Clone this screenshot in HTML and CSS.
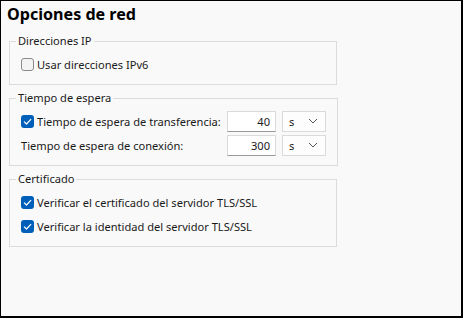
FILE: index.html
```html
<!DOCTYPE html>
<html lang="es">
  <head>
    <meta charset="UTF-8" />
    <title>Opciones de red</title>
    <link rel="stylesheet" href="styles.css">
  </head>
  <body>
    <div class="panel">
      <h1>Opciones de red</h1>

      <fieldset class="group">
        <legend>Direcciones IP</legend>
        <label class="row">
          <span class="check"></span>
          Usar direcciones IPv6
        </label>
      </fieldset>

      <fieldset class="group">
        <legend>Tiempo de espera</legend>
        <div class="row">
          <label class="row-label">
            <span class="check checked">
              <svg viewBox="0 0 13 13" width="13" height="13"><path d="M3.3 6.8 L5.5 9 L9.8 4.4" fill="none" stroke="#fff" stroke-width="1.2" stroke-linecap="round" stroke-linejoin="round"/></svg>
            </span>
            Tiempo de espera de transferencia:
          </label>
          <input class="num" type="text" value="40" />
          <div class="unit">s
            <svg viewBox="0 0 10 6" width="10" height="6"><path d="M1 1 L5 5 L9 1" fill="none" stroke="#555" stroke-width="1"/></svg>
          </div>
        </div>
        <div class="row">
          <label class="row-label">Tiempo de espera de conexión:</label>
          <input class="num" type="text" value="300" />
          <div class="unit">s
            <svg viewBox="0 0 10 6" width="10" height="6"><path d="M1 1 L5 5 L9 1" fill="none" stroke="#555" stroke-width="1"/></svg>
          </div>
        </div>
      </fieldset>

      <fieldset class="group">
        <legend>Certificado</legend>
        <label class="row">
          <span class="check checked">
            <svg viewBox="0 0 13 13" width="13" height="13"><path d="M3.3 6.8 L5.5 9 L9.8 4.4" fill="none" stroke="#fff" stroke-width="1.2" stroke-linecap="round" stroke-linejoin="round"/></svg>
          </span>
          Verificar el certificado del servidor TLS/SSL
        </label>
        <label class="row">
          <span class="check checked">
            <svg viewBox="0 0 13 13" width="13" height="13"><path d="M3.3 6.8 L5.5 9 L9.8 4.4" fill="none" stroke="#fff" stroke-width="1.2" stroke-linecap="round" stroke-linejoin="round"/></svg>
          </span>
          Verificar la identidad del servidor TLS/SSL
        </label>
      </fieldset>
    </div>
  </body>
</html>
```

FILE: styles.css
```css
html,
body {
  margin: 0;
  height: 100%;
}

body {
  font-family: "Noto Sans", "Open Sans", sans-serif;
  font-size: 11.1px;
  color: #1a1a1a;
  background-color: #f9f9f9;
}

.panel {
  box-sizing: border-box;
  height: 318px;
  width: 463px;
  border-top: 1px solid #000;
  border-left: 1px solid #000;
  border-right: 2px solid #000;
  border-bottom: 2px solid #000;
  padding: 0 0 0 8px;
}

h1 {
  margin: 0 0 0 -2px;
  padding-top: 1px;
  font-size: 16.1px;
  font-weight: bold;
  line-height: 24px;
  color: #000;
  height: 32px;
  white-space: nowrap;
}

.group {
  box-sizing: border-box;
  width: 328px;
  margin: 0 0 6px 0;
  padding: 4px 11px 8px;
  border: 1px solid #dcdcdc;
  white-space: nowrap;
}

.group legend {
  margin-left: -5px;
  padding: 0 2px;
  line-height: 14px;
}

.row {
  display: flex;
  align-items: center;
  height: 24px;
}

.row-label {
  display: flex;
  align-items: center;
  width: 206px;
}

.check {
  box-sizing: border-box;
  display: inline-flex;
  width: 13px;
  height: 13px;
  margin-right: 3px;
  border: 1px solid #8a8a8a;
  border-radius: 3px;
  background: #f3f3f3;
}

.check.checked {
  border: none;
  background: #005fb8;
}

.num {
  box-sizing: border-box;
  width: 49px;
  height: 21px;
  padding: 0 5px;
  border: 1px solid #dadada;
  border-bottom-color: #9a9a9a;
  background: #fff;
  font: inherit;
  text-align: right;
  color: #1a1a1a;
}

.unit {
  box-sizing: border-box;
  display: flex;
  align-items: center;
  justify-content: space-between;
  width: 44px;
  height: 21px;
  margin-left: 6px;
  padding: 0 7px 0 6px;
  border: 1px solid #dadada;
  background: #fdfdfd;
}
```
